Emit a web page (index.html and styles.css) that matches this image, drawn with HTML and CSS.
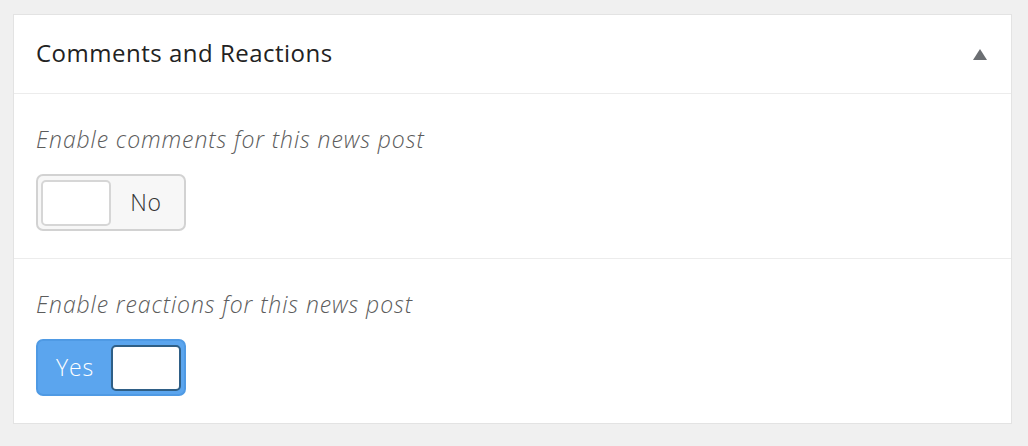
FILE: index.html
```html
<!DOCTYPE html>
<html lang="en">
<head>
    <meta charset="UTF-8">
    <title>Comments and Reactions</title>
    <link rel="stylesheet" href="styles.css">
</head>
<body>

    <!-- Collapsible panel -->
    <div class="panel">
        <div class="panel-header">
            <span class="panel-title">Comments and Reactions</span>
            <span class="caret"></span>
        </div>

        <div class="panel-row">
            <div class="field-label">Enable comments for this news post</div>
            <div class="switch">
                <span class="knob"></span>
                <span class="switch-text">No</span>
            </div>
        </div>

        <div class="panel-row">
            <div class="field-label">Enable reactions for this news post</div>
            <div class="switch on">
                <span class="switch-text">Yes</span>
                <span class="knob"></span>
            </div>
        </div>
    </div>

</body>
</html>
```

FILE: styles.css
```css
body {
    margin: 0;
    padding: 14px 16px 22px 13px;
    background-color: #f0f0f0;
    font-family: 'Open Sans', Lato, sans-serif;
    font-weight: 300;
}
.panel {
    background-color: white;
    border: 1px solid #e3e3e3;
}
.panel-header {
    box-sizing: border-box;
    height: 79px;
    padding: 0 24px 3px 22px;
    display: flex;
    align-items: center;
    justify-content: space-between;
    border-bottom: 1px solid #ececec;
}
.panel-title {
    font-size: 24px;
    font-weight: 400;
    letter-spacing: 0.5px;
    color: #222;
}
.caret {
    width: 0;
    height: 0;
    border-left: 7px solid transparent;
    border-right: 7px solid transparent;
    border-bottom: 11px solid #6b6e72;
    margin-top: 4px;
}
.panel-row {
    padding: 29px 22px 27px;
    border-bottom: 1px solid #ececec;
}
.panel-row:last-child {
    border-bottom: none;
}
.field-label {
    font-size: 23px;
    font-style: italic;
    letter-spacing: 0.9px;
    color: #5c5c5c;
    margin-bottom: 19px;
}
.switch {
    box-sizing: border-box;
    width: 150px;
    height: 57px;
    border: 2px solid #d2d2d2;
    border-radius: 7px;
    background-color: #f7f7f7;
    display: flex;
    align-items: center;
    padding: 0 3px;
}
.knob {
    box-sizing: border-box;
    width: 70px;
    height: 46px;
    background-color: white;
    border: 2px solid #d6d6d6;
    border-radius: 5px;
}
.switch-text {
    flex: 1;
    text-align: center;
    font-size: 23px;
    letter-spacing: 0.8px;
    color: #333;
    margin-top: -2px;
}
.switch.on {
    background-color: #5ba5ee;
    border-color: #4f9ae4;
}
.switch.on .switch-text {
    color: white;
    margin-right: 2px;
}
.switch.on .knob {
    border-color: #2f5f86;
}
```
